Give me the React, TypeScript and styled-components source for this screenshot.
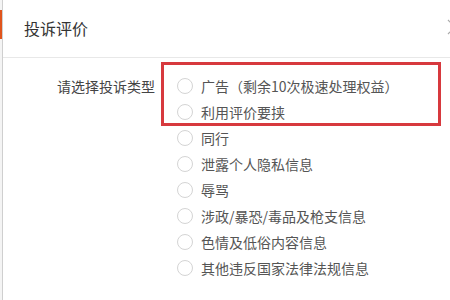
import React from 'react';
import styled, { createGlobalStyle } from 'styled-components';

const GlobalStyle = createGlobalStyle`
  html, body {
    margin: 0;
    padding: 0;
    background: #fff;
  }
  body {
    font-family: "Noto Sans CJK SC", "Noto Sans", "Liberation Sans", sans-serif;
  }
`;

const Page = styled.div`
  display: flex;
  width: 450px;
  height: 300px;
  overflow: hidden;
  background: #fff;
`;

const LeftEdge = styled.div`
  width: 2px;
  flex-shrink: 0;
  border-right: 1px solid #cfcfcf;
  background: #f4f4f4;
  display: flex;
  flex-direction: column;
`;

const EdgeTab = styled.div`
  margin-top: 10px;
  height: 29px;
  background: #e0541c;
`;

const Dialog = styled.div`
  flex: 1;
  display: flex;
  flex-direction: column;
  min-width: 0;
`;

const Header = styled.div`
  height: 57px;
  display: flex;
  align-items: center;
  justify-content: space-between;
  padding-left: 21px;
  border-bottom: 1px solid #e8e8e8;
  flex-shrink: 0;
`;

const Title = styled.div`
  font-size: 16px;
  color: #333;
  letter-spacing: 0;
  margin-top: -1px;
`;

const CloseButton = styled.div`
  width: 16px;
  height: 16px;
  margin-right: -13px;
  margin-top: -4px;
  display: flex;
`;

const Body = styled.div`
  display: flex;
  padding-top: 15px;
`;

const Label = styled.div`
  width: 152px;
  flex-shrink: 0;
  text-align: right;
  font-size: 14px;
  line-height: 26px;
  color: #444;
`;

const OptionList = styled.div`
  position: relative;
  margin-left: 22px;
  display: flex;
  flex-direction: column;
`;

const Highlight = styled.div`
  position: absolute;
  left: -16px;
  top: -11px;
  width: 280px;
  height: 64px;
  box-sizing: border-box;
  border: 3px solid #d7393e;
  pointer-events: none;
`;

const Option = styled.label`
  display: flex;
  align-items: center;
  height: 26px;
  gap: 8px;
  font-size: 14px;
  color: #555;
  white-space: nowrap;
  cursor: pointer;
`;

const Radio = styled.span`
  width: 16px;
  height: 16px;
  box-sizing: border-box;
  border: 1px solid #d4d4d4;
  border-radius: 50%;
  flex-shrink: 0;
`;

const options = [
  '广告（剩余10次极速处理权益）',
  '利用评价要挟',
  '同行',
  '泄露个人隐私信息',
  '辱骂',
  '涉政/暴恐/毒品及枪支信息',
  '色情及低俗内容信息',
  '其他违反国家法律法规信息',
];

const App: React.FC = () => {
  return (
    <Page>
      <GlobalStyle />
      <LeftEdge>
        <EdgeTab />
      </LeftEdge>
      <Dialog>
        <Header>
          <Title>投诉评价</Title>
          <CloseButton>
            <svg width="16" height="16" viewBox="0 0 16 16">
              <path d="M1 1 L15 15 M15 1 L1 15" stroke="#aaa" strokeWidth="1.2" fill="none" />
            </svg>
          </CloseButton>
        </Header>
        <Body>
          <Label>请选择投诉类型</Label>
          <OptionList>
            {options.map((text) => (
              <Option key={text}>
                <Radio />
                {text}
              </Option>
            ))}
            <Highlight />
          </OptionList>
        </Body>
      </Dialog>
    </Page>
  );
};

export default App;
